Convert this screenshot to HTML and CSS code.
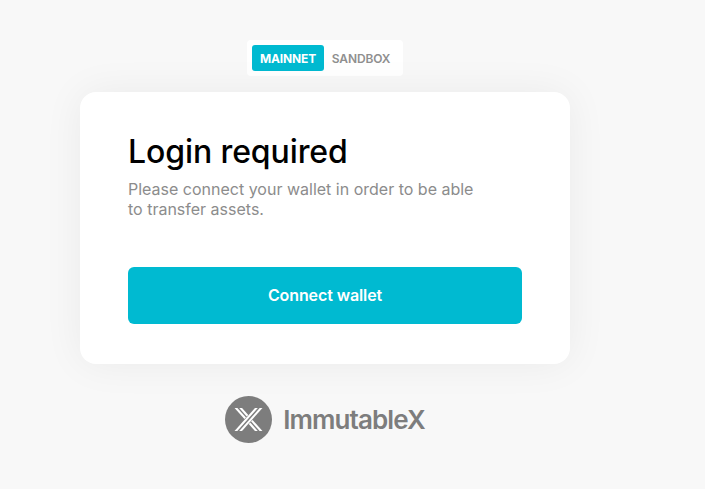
FILE: index.html
```
<!DOCTYPE html>
<html lang="en">

<head>
    <meta charset="UTF-8">
    <meta name="viewport" content="width=device-width, initial-scale=1.0">
    <title>Login required</title>
    <link rel="stylesheet" href="styles.css">
</head>

<body>
    <main class="page">
        <div class="network">
            <button class="network-button active">MAINNET</button>
            <button class="network-button">SANDBOX</button>
        </div>

        <div class="card">
            <h1>Login required</h1>
            <p>Please connect your wallet in order to be able to transfer assets.</p>
            <button class="connect-button">Connect wallet</button>
        </div>

        <div class="logo">
            <svg width="47" height="47" viewBox="0 0 47 47" aria-hidden="true">
                <circle cx="23.5" cy="23.5" r="23.5" fill="#7d7d7d" />
                <svg x="9" y="12" width="29" height="23" viewBox="9 12 29 23">
                    <g fill="none" stroke="#fff" stroke-width="2.1">
                        <path d="M8.7 9.5L20.2 22.3" />
                        <path d="M13.4 9.5L22.5 19.7" />
                        <path d="M33.6 9.5L8.7 37.5" />
                        <path d="M38.3 9.5L13.4 37.5" />
                        <path d="M24.5 27.3L33.6 37.5" />
                        <path d="M26.8 24.6L38.3 37.5" />
                    </g>
                </svg>
            </svg>
            <span>ImmutableX</span>
        </div>
    </main>
</body>

</html>
```
FILE: styles.css
```
* {
    box-sizing: border-box;
}

body {
    margin: 0;
    background-color: #f8f8f8;
    font-family: Inter, "Liberation Sans", sans-serif;
}

button {
    border: none;
    font-family: inherit;
    cursor: pointer;
}

.page {
    width: 650px;
    padding-top: 40px;
    display: flex;
    flex-direction: column;
    align-items: center;
}

/* Network switch */
.network {
    display: flex;
    gap: 1px;
    width: 156px;
    height: 36px;
    padding: 5px;
    border-radius: 4px;
    background-color: #fff;
}

.network-button {
    width: 72px;
    padding: 1px 0 0;
    border-radius: 3px;
    background-color: transparent;
    color: #8f8f8f;
    font-size: 12px;
    font-weight: 600;
    line-height: 25px;
    letter-spacing: -0.15px;
}

.network-button.active {
    background-color: #00bad1;
    color: #fff;
    font-weight: 700;
}

/* Login card */
.card {
    width: 490px;
    height: 272px;
    margin-top: 16px;
    padding: 40px 48px;
    border-radius: 16px;
    background-color: #fff;
    box-shadow: 0 0 40px rgba(0, 0, 0, 0.06);
}

.card h1 {
    margin: 0;
    font-size: 32px;
    font-weight: 500;
    line-height: 40px;
    letter-spacing: -0.1px;
}

.card p {
    width: 360px;
    margin: 7px 0 48px;
    color: #8c8c8c;
    font-size: 16px;
    line-height: 20px;
}

.connect-button {
    display: block;
    width: 100%;
    height: 57px;
    padding: 0 0 2px;
    border-radius: 6px;
    background-color: #00bad1;
    color: #fff;
    font-size: 16px;
    font-weight: 600;
    letter-spacing: -0.1px;
}

.logo {
    display: flex;
    align-items: center;
    gap: 11px;
    margin-top: 32px;
    color: #7d7d7d;
    font-size: 26px;
    font-weight: 600;
    letter-spacing: -0.9px;
}
```
